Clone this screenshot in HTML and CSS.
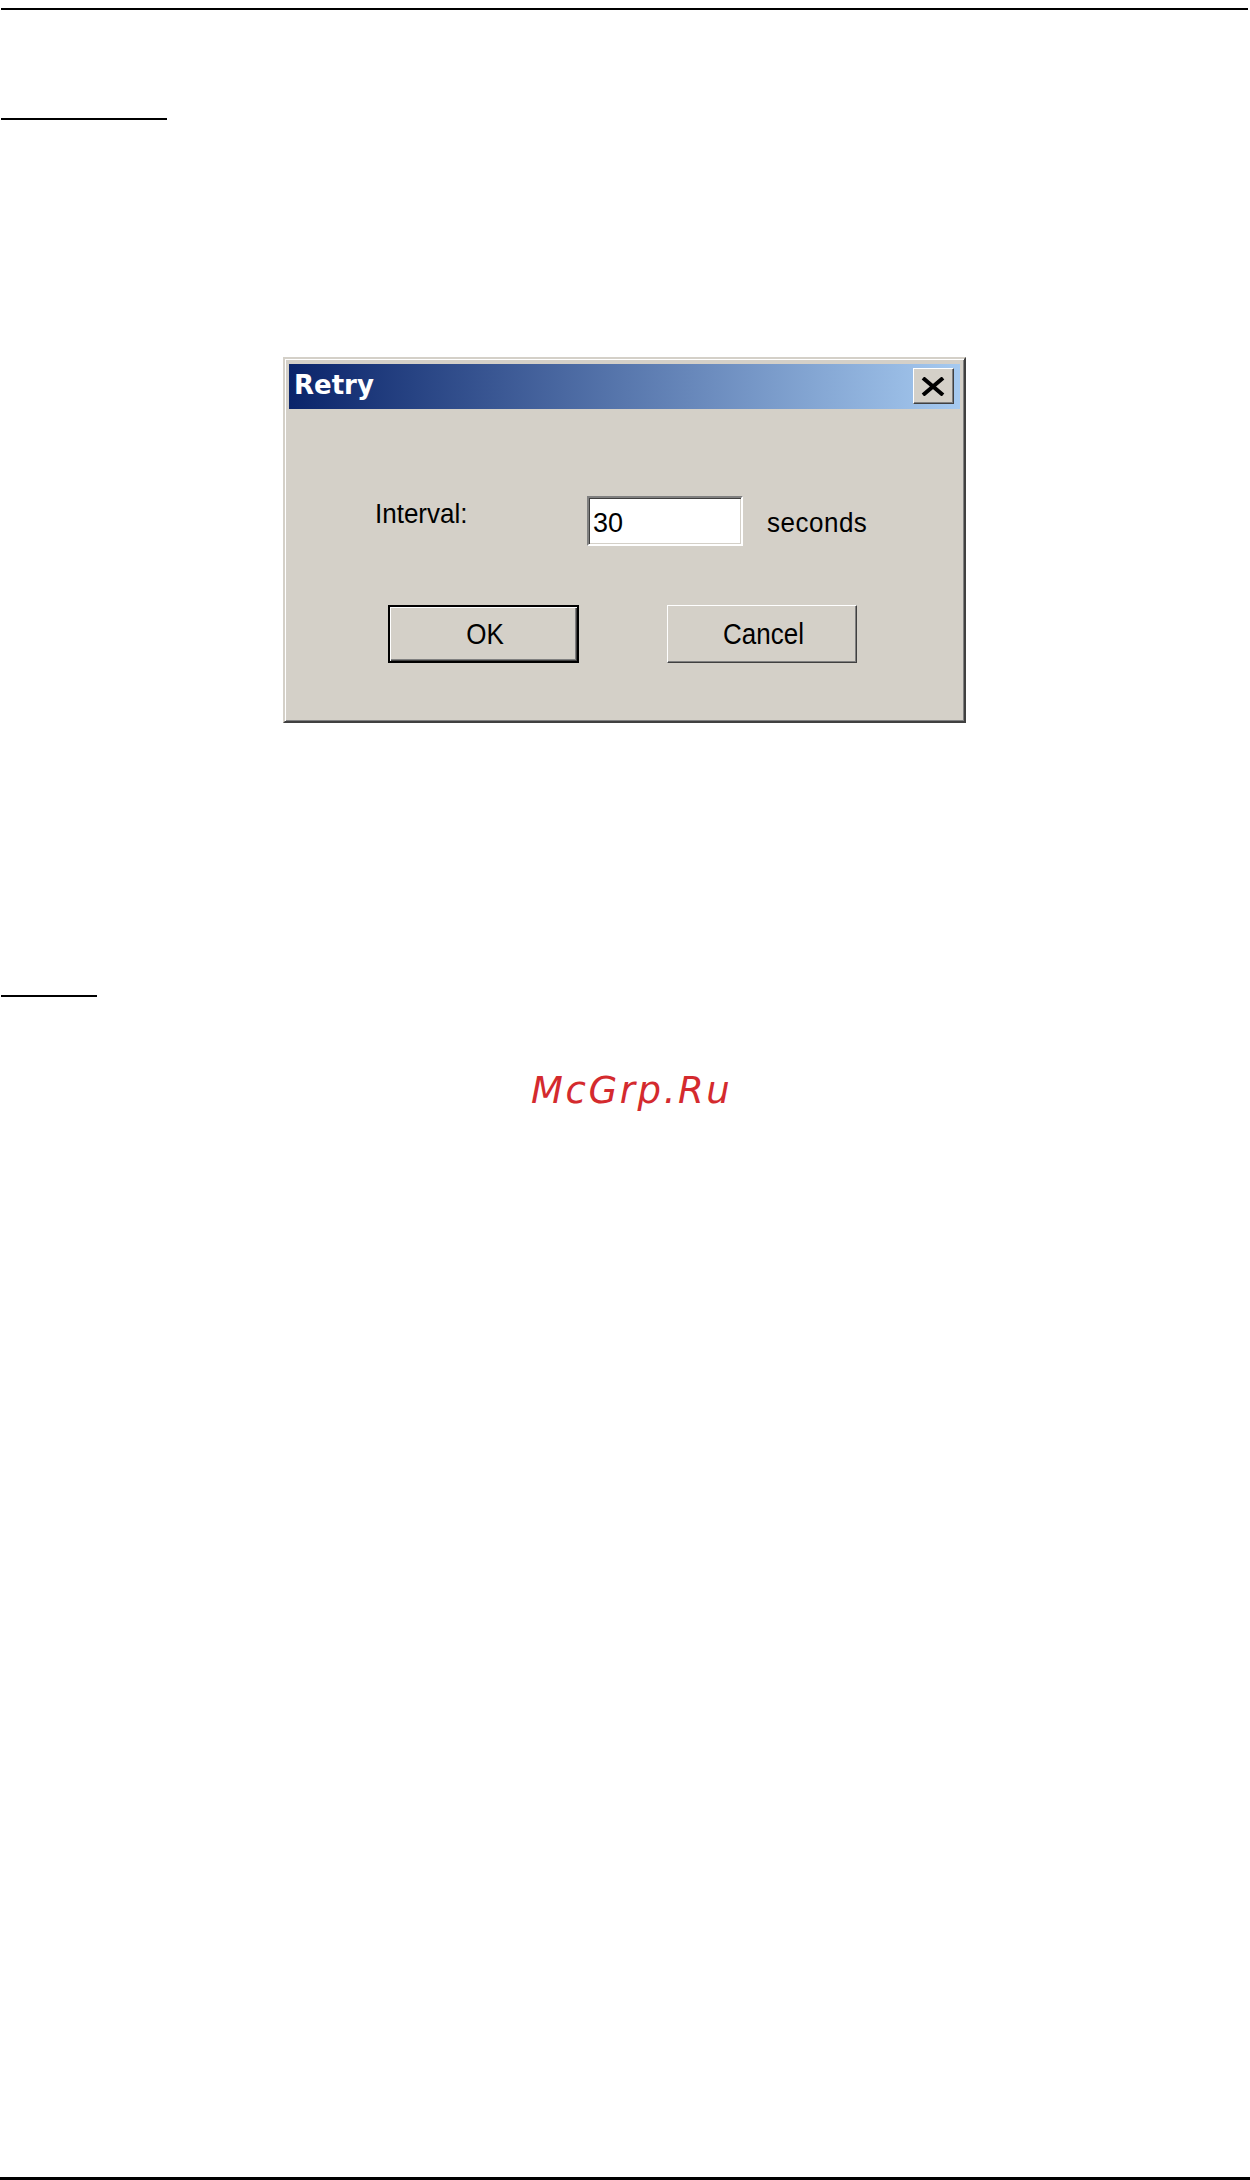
FILE: index.html
```html
<!DOCTYPE html>
<html lang="en">
<head>
<meta charset="utf-8">
<title>Retry</title>
<link rel="stylesheet" href="styles.css">
</head>
<body>
<div class="page">
  <div class="rule rule-top"></div>
  <div class="heading-line heading-line-1"></div>

  <div class="dialog">
    <div class="titlebar">
      <span class="title">Retry</span>
      <div class="close-btn">
        <svg width="24" height="19" viewBox="0 0 24 19" aria-hidden="true">
          <path d="M2 1 L22 18 M22 1 L2 18" stroke="#000" stroke-width="4" fill="none"/>
        </svg>
      </div>
    </div>
    <div class="dialog-body">
      <div class="field-row">
        <span class="label">Interval:</span>
        <div class="textbox">30</div>
        <span class="unit">seconds</span>
      </div>
      <div class="button-row">
        <div class="btn btn-default"><span>OK</span></div>
        <div class="btn"><span>Cancel</span></div>
      </div>
    </div>
  </div>

  <div class="heading-line heading-line-2"></div>
  <div class="watermark">McGrp.Ru</div>

  <div class="rule rule-bottom"></div>
</div>
</body>
</html>
```

FILE: styles.css
```css
html, body {
  margin: 0;
  padding: 0;
  background: #fff;
}

.page {
  width: 1250px;
  min-height: 2180px;
  display: flex;
  flex-direction: column;
  align-items: flex-start;
  box-sizing: border-box;
}

.rule {
  background: #000;
}

.rule-top {
  margin-top: 8px;
  margin-left: 1px;
  width: 1247px;
  height: 2px;
}

.rule-bottom {
  margin-top: auto;
  width: 1250px;
  height: 3px;
}

.heading-line {
  background: #000;
  height: 2px;
  margin-left: 1px;
}

.heading-line-1 {
  margin-top: 108px;
  width: 166px;
}

.heading-line-2 {
  margin-top: 272px;
  width: 96px;
}

/* ---------- dialog ---------- */
.dialog {
  margin-top: 237px;
  margin-left: 283px;
  width: 683px;
  height: 366px;
  box-sizing: border-box;
  background: #d4d0c8;
  border: 2px solid;
  border-color: #d4d0c8 #404040 #404040 #d4d0c8;
  box-shadow: inset 1px 1px 0 #ffffff, inset -1px -1px 0 #808080;
  padding: 5px 4px 4px 4px;
  display: flex;
  flex-direction: column;
  font-family: "Liberation Sans", Arial, sans-serif;
  font-size: 26px;
  color: #000;
}

.titlebar {
  height: 45px;
  display: flex;
  align-items: flex-start;
  background: linear-gradient(to right, #0a246a 0%, #a6caf0 100%);
}

.title {
  font-family: "DejaVu Sans", Verdana, sans-serif;
  font-weight: bold;
  font-size: 26px;
  line-height: 29px;
  color: #fff;
  margin-top: 7px;
  padding-left: 5px;
}

.close-btn {
  margin-left: auto;
  margin-right: 6px;
  margin-top: 4px;
  width: 41px;
  height: 36px;
  box-sizing: border-box;
  background: #d4d0c8;
  border: 1px solid;
  border-color: #ffffff #404040 #404040 #ffffff;
  box-shadow: inset -1px -1px 0 #808080;
  display: flex;
  align-items: center;
  justify-content: center;
  padding: 0 1px 0 0;
}

.close-btn svg {
  display: block;
}

.dialog-body {
  flex: 1;
  display: flex;
  flex-direction: column;
}

.field-row {
  margin-top: 87px;
  padding-left: 86px;
  display: flex;
  align-items: flex-start;
  height: 50px;
}

.label {
  width: 212px;
  line-height: 30px;
  margin-top: 3px;
  transform: scaleY(1.08);
  transform-origin: left bottom;
}

.textbox {
  width: 156px;
  height: 50px;
  box-sizing: border-box;
  background: #fff;
  border: 2px solid;
  border-color: #808080 #ffffff #ffffff #808080;
  box-shadow: inset 1px 1px 0 #404040, inset -1px -1px 0 #d4d0c8;
  padding: 10px 0 0 4px;
  line-height: 30px;
  font-size: 27px;
}

.unit {
  margin-left: 24px;
  line-height: 30px;
  margin-top: 12px;
  letter-spacing: 0.5px;
  transform: scaleY(1.08);
  transform-origin: left bottom;
}

.button-row {
  margin-top: 59px;
  padding-left: 99px;
  display: flex;
  gap: 88px;
}

.btn {
  width: 190px;
  height: 58px;
  box-sizing: border-box;
  background: #d4d0c8;
  border: 1px solid;
  border-color: #ffffff #404040 #404040 #ffffff;
  box-shadow: inset -1px -1px 0 #808080;
  display: flex;
  align-items: center;
  justify-content: center;
  line-height: 30px;
}

.btn span {
  display: inline-block;
  transform: scaleY(1.12);
  padding-left: 3px;
}

.btn-default {
  width: 191px;
  border: 2px solid #000;
  box-shadow: inset 1px 1px 0 #ffffff, inset -1px -1px 0 #404040, inset -2px -2px 0 #808080;
}

/* ---------- watermark ---------- */
.watermark {
  margin-top: 72px;
  margin-left: 531px;
  font-family: "DejaVu Sans", Verdana, sans-serif;
  font-style: italic;
  font-size: 37px;
  line-height: 44px;
  letter-spacing: 2.6px;
  color: #d42a2e;
}
```
